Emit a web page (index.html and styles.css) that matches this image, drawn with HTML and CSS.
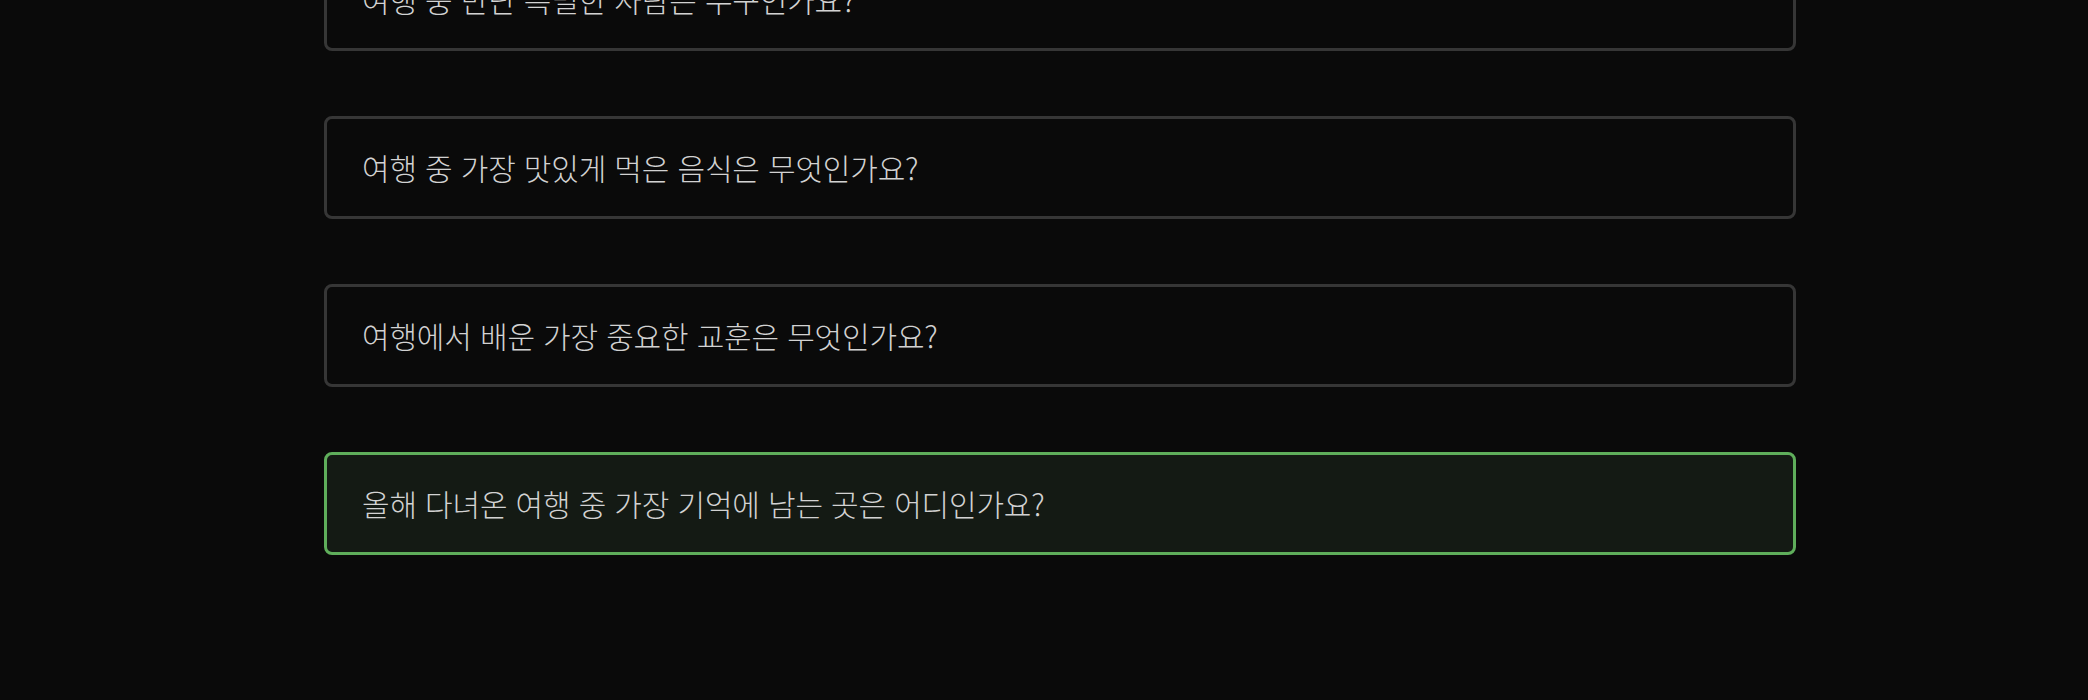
FILE: index.html
```html
<!DOCTYPE html>
<html lang="ko">
<head>
<meta charset="utf-8">
<title>여행 질문</title>
<link rel="stylesheet" href="styles.css">
</head>
<body>
<main class="list">
  <div class="card">여행 중 만난 특별한 사람은 누구인가요?</div>
  <div class="card">여행 중 가장 맛있게 먹은 음식은 무엇인가요?</div>
  <div class="card">여행에서 배운 가장 중요한 교훈은 무엇인가요?</div>
  <div class="card card-selected">올해 다녀온 여행 중 가장 기억에 남는 곳은 어디인가요?</div>
</main>
</body>
</html>
```
FILE: styles.css
```css
html, body {
  margin: 0;
  padding: 0;
  background: #0a0a0a;
  height: 100%;
  overflow: hidden;
}

.list {
  width: 1472px;
  margin: -52px 0 0 324px;
  display: flex;
  flex-direction: column;
  gap: 65px;
}

.card {
  box-sizing: border-box;
  height: 103px;
  border: 3px solid #363636;
  border-radius: 8px;
  padding: 0 35px;
  display: flex;
  align-items: center;
  color: #d2d2d2;
  font-family: "Noto Sans CJK KR", "Noto Sans", sans-serif;
  font-weight: 300;
  font-size: 30px;
  letter-spacing: -0.17px;
  line-height: 37px;
  background: #0a0a0a;
}

.card-selected {
  border-color: #5fae5b;
  background: #141a14;
}
```
